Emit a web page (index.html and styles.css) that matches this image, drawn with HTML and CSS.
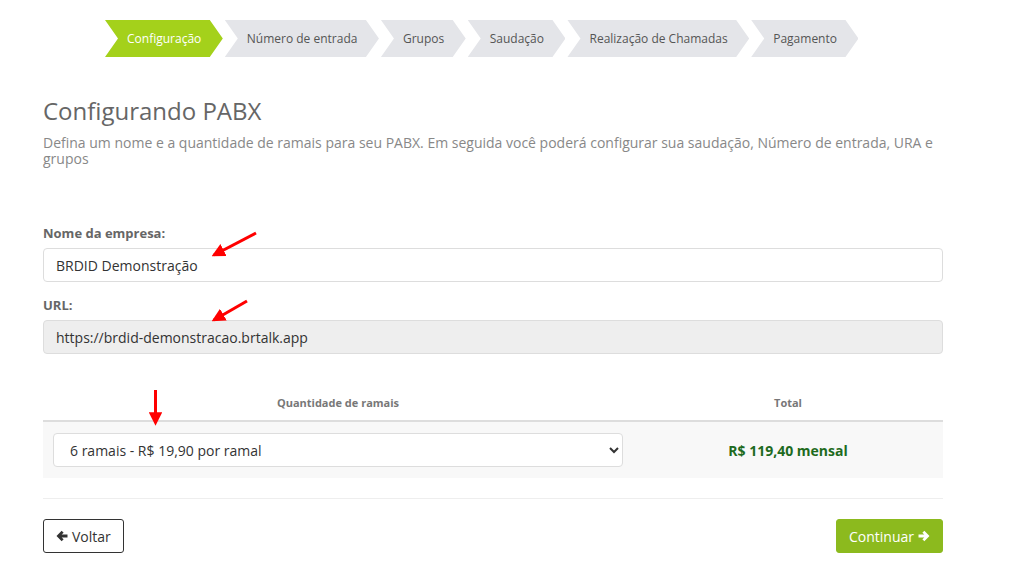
FILE: index.html
```html
<!DOCTYPE html>
<html lang="pt-BR">
<head>
  <meta charset="UTF-8">
  <meta name="viewport" content="width=device-width, initial-scale=1.0">
  <title>Configurando PABX</title>
  <link rel="stylesheet" href="styles.css">
</head>
<body>
  <div class="wizard">
    <div class="step active">Configuração</div>
    <div class="step">Número de entrada</div>
    <div class="step">Grupos</div>
    <div class="step">Saudação</div>
    <div class="step">Realização de Chamadas</div>
    <div class="step">Pagamento</div>
  </div>

  <div class="container">
    <h1>Configurando PABX</h1>
    <p class="intro">Defina um nome e a quantidade de ramais para seu PABX. Em seguida você poderá configurar sua saudação, Número de entrada, URA e grupos</p>

    <div class="field">
      <label for="empresa">Nome da empresa:</label>
      <input id="empresa" type="text" value="BRDID Demonstração">
    </div>
    <div class="field">
      <label for="url">URL:</label>
      <input id="url" type="text" value="https://brdid-demonstracao.brtalk.app" readonly>
    </div>

    <table class="plan">
      <thead>
        <tr>
          <th class="col-qty">Quantidade de ramais</th>
          <th>Total</th>
        </tr>
      </thead>
      <tbody>
        <tr>
          <td>
            <select>
              <option>6 ramais - R$ 19,90 por ramal</option>
            </select>
          </td>
          <td class="total">R$ 119,40 mensal</td>
        </tr>
      </tbody>
    </table>

    <div class="actions">
      <button class="btn-back">
        <svg viewBox="0 0 14 14" width="12" height="12"><path d="M6.6 0.8 L0.6 7 L6.6 13.2 L8.9 10.9 L6.6 8.7 H13.4 V5.3 H6.6 L8.9 3.1 Z" fill="currentColor"/></svg>
        Voltar
      </button>
      <button class="btn-next">
        Continuar
        <svg viewBox="0 0 14 14" width="12" height="12"><path d="M7.4 0.8 L13.4 7 L7.4 13.2 L5.1 10.9 L7.4 8.7 H0.6 V5.3 H7.4 L5.1 3.1 Z" fill="currentColor"/></svg>
      </button>
    </div>
  </div>

  <!-- red marks drawn on the screenshot -->
  <svg class="marks" width="1023" height="569" viewBox="0 0 1023 569">
    <defs>
      <marker id="head" viewBox="0 0 10 10" refX="8" refY="5" markerWidth="4.5" markerHeight="4.5" orient="auto">
        <path d="M0 0 L10 5 L0 10 Z" fill="#ff0000"/>
      </marker>
    </defs>
    <line x1="256" y1="233" x2="214" y2="255" stroke="#ff0000" stroke-width="3" marker-end="url(#head)"/>
    <line x1="247" y1="301" x2="214" y2="320" stroke="#ff0000" stroke-width="3" marker-end="url(#head)"/>
    <line x1="155.5" y1="390" x2="155.5" y2="423" stroke="#ff0000" stroke-width="3" marker-end="url(#head)"/>
  </svg>
</body>
</html>
```

FILE: styles.css
```css
/* General styles */
body {
  font-family: 'Open Sans', 'Liberation Sans', sans-serif;
  margin: 0;
  padding: 0;
  background: #fff;
  color: #333;
  position: relative;
}

/* Wizard steps */
.wizard {
  display: flex;
  gap: 2px;
  padding: 20px 0 0 105px;
}

.step {
  height: 37px;
  line-height: 37px;
  padding: 0 21.5px 0 22px;
  font-size: 12px;
  color: #555;
  background: #e4e5e9;
  white-space: nowrap;
  clip-path: polygon(0 0, calc(100% - 13px) 0, 100% 50%, calc(100% - 13px) 100%, 0 100%, 13px 50%);
}

.step.active {
  background: #a4d11b;
  color: #fff;
}

.container {
  width: 900px;
  margin: 0 0 0 43px;
}

h1 {
  font-size: 24px;
  font-weight: 400;
  color: #666;
  margin: 38px 0 0;
  line-height: 32px;
}

.intro {
  font-size: 14px;
  color: #888;
  line-height: 16px;
  margin: 8px 0 0;
}

.field {
  display: flex;
  flex-direction: column;
}

.field:first-of-type {
  margin-top: 57px;
}

.field + .field {
  margin-top: 14px;
}

label {
  font-size: 13px;
  font-weight: 700;
  color: #666;
  margin-bottom: 6px;
}

input {
  font-family: inherit;
  font-size: 14px;
  color: #333;
  height: 34px;
  padding: 0 12px;
  border: 1px solid #ddd;
  border-radius: 4px;
  box-sizing: border-box;
}

input[readonly] {
  background: #eee;
}

/* Plan table */
.plan {
  width: 100%;
  border-collapse: collapse;
  margin-top: 31px;
}

.plan th {
  font-size: 11px;
  font-weight: 700;
  color: #777;
  height: 35px;
  padding: 0;
  border-bottom: 2px solid #ddd;
}

.col-qty {
  width: 590px;
}

.plan td {
  background: #f8f8f8;
  height: 56px;
  padding: 0 10px;
  text-align: center;
}

.plan select {
  width: 100%;
  height: 34px;
  font-family: inherit;
  font-size: 14px;
  color: #333;
  background: #fff;
  border: 1px solid #ddd;
  border-radius: 4px;
  padding: 0 12px;
}

.total {
  font-size: 14px;
  font-weight: 700;
  color: #1e6b1e;
}

/* Buttons */
.actions {
  display: flex;
  justify-content: space-between;
  border-top: 1px solid #eee;
  margin-top: 20px;
  padding-top: 20px;
}

.actions button {
  display: flex;
  align-items: center;
  gap: 4px;
  height: 34px;
  font-family: inherit;
  font-size: 14px;
  border-radius: 3px;
  padding: 0 12px;
  cursor: pointer;
}

.btn-back {
  background: #fff;
  color: #333;
  border: 1px solid #333;
}

.btn-next {
  background: #8cba1e;
  color: #fff;
  border: 1px solid #8cba1e;
}

.marks {
  position: absolute;
  top: 0;
  left: 0;
  pointer-events: none;
}
```
